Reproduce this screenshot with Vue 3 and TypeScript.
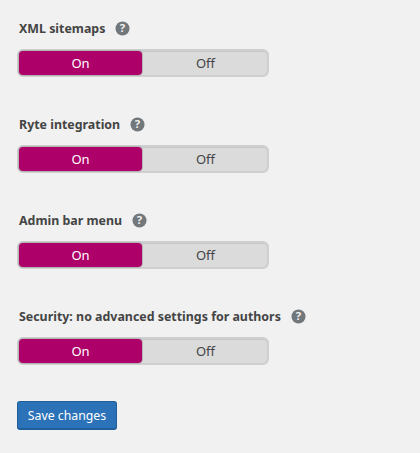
<script setup lang="ts">
const settings: string[] = [
  'XML sitemaps',
  'Ryte integration',
  'Admin bar menu',
  'Security: no advanced settings for authors',
]
</script>

<template>
  <main class="page">
    <section v-for="name in settings" :key="name" class="setting">
      <div class="label-row">
        <span class="label">{{ name }}</span>
        <svg class="help" viewBox="0 0 16 16" width="15" height="15" aria-hidden="true">
          <circle cx="8" cy="8" r="7.5" fill="#72777c" />
          <text x="8" y="12.2" text-anchor="middle" class="q">?</text>
        </svg>
      </div>
      <div class="toggle">
        <span class="opt on">On</span>
        <span class="opt off">Off</span>
      </div>
    </section>
    <button class="save" type="button">Save changes</button>
  </main>
</template>

<style>
html, body { margin: 0; background: #f1f1f1; }
</style>

<style scoped>
.page {
  box-sizing: border-box;
  width: 420px;
  height: 453px;
  padding: 19px 0 0 17px;
  background: #f1f1f1;
  font-family: "Noto Sans", "Open Sans", sans-serif;
  font-size: 13px;
  color: #444;
  overflow: hidden;
}
.setting { height: 96px; }
.label-row {
  display: flex;
  align-items: center;
  height: 18px;
  padding-left: 2px;
  gap: 10px;
}
.label { font-weight: 700; font-size: 12.4px; color: #444; }
.help { flex: none; }
.q { font: 700 12px "Noto Sans", sans-serif; fill: #f1f1f1; }
.toggle {
  box-sizing: border-box;
  display: flex;
  width: 252px;
  height: 28px;
  margin-top: 12px;
  background: #dbdbdb;
  border-radius: 6px;
  border: 2px solid #cfcfcf;
  box-shadow: inset 0 1px 0 #c8c8c8;
}
.opt {
  display: flex;
  align-items: center;
  justify-content: center;
  color: #444;
  font-size: 13px;
}
.off { flex: 1; padding-left: 2px; }
.on {
  flex: none;
  width: 123px;
  background: #ad0068;
  color: #fff;
  border-radius: 4px;
  box-shadow: 0 0 0 1px #b5b5b5;
}
.save {
  display: block;
  box-sizing: border-box;
  width: 100px;
  height: 29px;
  margin-top: -2px;
  padding: 0;
  background: #2b72b8;
  border: 1px solid #1f5f99;
  border-bottom-width: 2px;
  border-radius: 3px;
  color: #fff;
  font-family: inherit;
  font-size: 12.3px;
}
</style>
